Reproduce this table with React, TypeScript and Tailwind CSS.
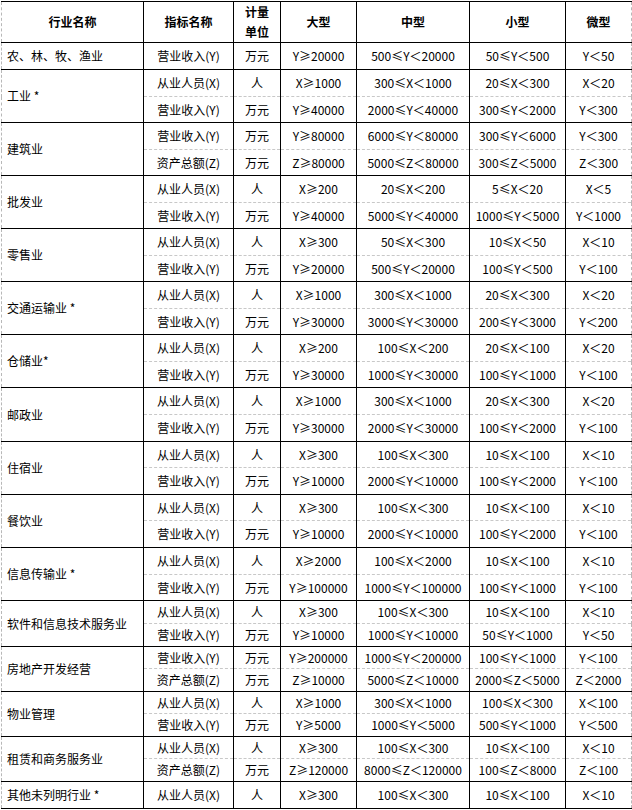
type Sub = { name: string; unit: string; big: string; mid: string; small: string; micro: string };
type Group = { title: string; rows: Sub[]; hs: string[] };

const X = "从业人员(X)";
const Y = "营业收入(Y)";
const Z = "资产总额(Z)";

const groups: Group[] = [
  {
    title: "农、林、牧、渔业",
    hs: ["h-[27px]"],
    rows: [{ name: Y, unit: "万元", big: "Y≥20000", mid: "500≤Y＜20000", small: "50≤Y＜500", micro: "Y＜50" }],
  },
  {
    title: "工业 *",
    hs: ["h-[27px]", "h-[26px]"],
    rows: [
      { name: X, unit: "人", big: "X≥1000", mid: "300≤X＜1000", small: "20≤X＜300", micro: "X＜20" },
      { name: Y, unit: "万元", big: "Y≥40000", mid: "2000≤Y＜40000", small: "300≤Y＜2000", micro: "Y＜300" },
    ],
  },
  {
    title: "建筑业",
    hs: ["h-[27px]", "h-[26px]"],
    rows: [
      { name: Y, unit: "万元", big: "Y≥80000", mid: "6000≤Y＜80000", small: "300≤Y＜6000", micro: "Y＜300" },
      { name: Z, unit: "万元", big: "Z≥80000", mid: "5000≤Z＜80000", small: "300≤Z＜5000", micro: "Z＜300" },
    ],
  },
  {
    title: "批发业",
    hs: ["h-[27px]", "h-[26px]"],
    rows: [
      { name: X, unit: "人", big: "X≥200", mid: "20≤X＜200", small: "5≤X＜20", micro: "X＜5" },
      { name: Y, unit: "万元", big: "Y≥40000", mid: "5000≤Y＜40000", small: "1000≤Y＜5000", micro: "Y＜1000" },
    ],
  },
  {
    title: "零售业",
    hs: ["h-[27px]", "h-[26px]"],
    rows: [
      { name: X, unit: "人", big: "X≥300", mid: "50≤X＜300", small: "10≤X＜50", micro: "X＜10" },
      { name: Y, unit: "万元", big: "Y≥20000", mid: "500≤Y＜20000", small: "100≤Y＜500", micro: "Y＜100" },
    ],
  },
  {
    title: "交通运输业 *",
    hs: ["h-[27px]", "h-[26px]"],
    rows: [
      { name: X, unit: "人", big: "X≥1000", mid: "300≤X＜1000", small: "20≤X＜300", micro: "X＜20" },
      { name: Y, unit: "万元", big: "Y≥30000", mid: "3000≤Y＜30000", small: "200≤Y＜3000", micro: "Y＜200" },
    ],
  },
  {
    title: "仓储业*",
    hs: ["h-[27px]", "h-[26px]"],
    rows: [
      { name: X, unit: "人", big: "X≥200", mid: "100≤X＜200", small: "20≤X＜100", micro: "X＜20" },
      { name: Y, unit: "万元", big: "Y≥30000", mid: "1000≤Y＜30000", small: "100≤Y＜1000", micro: "Y＜100" },
    ],
  },
  {
    title: "邮政业",
    hs: ["h-[27px]", "h-[27px]"],
    rows: [
      { name: X, unit: "人", big: "X≥1000", mid: "300≤X＜1000", small: "20≤X＜300", micro: "X＜20" },
      { name: Y, unit: "万元", big: "Y≥30000", mid: "2000≤Y＜30000", small: "100≤Y＜2000", micro: "Y＜100" },
    ],
  },
  {
    title: "住宿业",
    hs: ["h-[26px]", "h-[27px]"],
    rows: [
      { name: X, unit: "人", big: "X≥300", mid: "100≤X＜300", small: "10≤X＜100", micro: "X＜10" },
      { name: Y, unit: "万元", big: "Y≥10000", mid: "2000≤Y＜10000", small: "100≤Y＜2000", micro: "Y＜100" },
    ],
  },
  {
    title: "餐饮业",
    hs: ["h-[26px]", "h-[27px]"],
    rows: [
      { name: X, unit: "人", big: "X≥300", mid: "100≤X＜300", small: "10≤X＜100", micro: "X＜10" },
      { name: Y, unit: "万元", big: "Y≥10000", mid: "2000≤Y＜10000", small: "100≤Y＜2000", micro: "Y＜100" },
    ],
  },
  {
    title: "信息传输业 *",
    hs: ["h-[27px]", "h-[26px]"],
    rows: [
      { name: X, unit: "人", big: "X≥2000", mid: "100≤X＜2000", small: "10≤X＜100", micro: "X＜10" },
      { name: Y, unit: "万元", big: "Y≥100000", mid: "1000≤Y＜100000", small: "100≤Y＜1000", micro: "Y＜100" },
    ],
  },
  {
    title: "软件和信息技术服务业",
    hs: ["h-[23px]", "h-[23px]"],
    rows: [
      { name: X, unit: "人", big: "X≥300", mid: "100≤X＜300", small: "10≤X＜100", micro: "X＜10" },
      { name: Y, unit: "万元", big: "Y≥10000", mid: "1000≤Y＜10000", small: "50≤Y＜1000", micro: "Y＜50" },
    ],
  },
  {
    title: "房地产开发经营",
    hs: ["h-[22px]", "h-[23px]"],
    rows: [
      { name: Y, unit: "万元", big: "Y≥200000", mid: "1000≤Y＜200000", small: "100≤Y＜1000", micro: "Y＜100" },
      { name: Z, unit: "万元", big: "Z≥10000", mid: "5000≤Z＜10000", small: "2000≤Z＜5000", micro: "Z＜2000" },
    ],
  },
  {
    title: "物业管理",
    hs: ["h-[22px]", "h-[23px]"],
    rows: [
      { name: X, unit: "人", big: "X≥1000", mid: "300≤X＜1000", small: "100≤X＜300", micro: "X＜100" },
      { name: Y, unit: "万元", big: "Y≥5000", mid: "1000≤Y＜5000", small: "500≤Y＜1000", micro: "Y＜500" },
    ],
  },
  {
    title: "租赁和商务服务业",
    hs: ["h-[22px]", "h-[23px]"],
    rows: [
      { name: X, unit: "人", big: "X≥300", mid: "100≤X＜300", small: "10≤X＜100", micro: "X＜10" },
      { name: Z, unit: "万元", big: "Z≥120000", mid: "8000≤Z＜120000", small: "100≤Z＜8000", micro: "Z＜100" },
    ],
  },
  {
    title: "其他未列明行业 *",
    hs: ["h-[27px]"],
    rows: [{ name: X, unit: "人", big: "X≥300", mid: "100≤X＜300", small: "10≤X＜100", micro: "X＜10" }],
  },
];

const cell = "border border-black p-0 text-center align-middle";
const th = "border border-black p-0 text-center align-middle font-bold";
// outer left / right edges are a light dashed rule, not black
const edgeL = "border-l-[#b8b8b8] [border-left-style:dashed]";
const edgeR = "border-r-[#b8b8b8] [border-right-style:dashed]";

export default function App() {
  return (
    <div className="bg-white w-[632px] h-[810px] pt-px pl-px text-[12px] text-black font-['Noto_Sans_CJK_SC',sans-serif]">
      <table className="w-[630px] table-fixed border-collapse leading-[14px]">
        <colgroup>
          <col className="w-[142px]" />
          <col className="w-[90px]" />
          <col className="w-[47px]" />
          <col className="w-[76px]" />
          <col className="w-[113px]" />
          <col className="w-[96px]" />
          <col className="w-[66px]" />
        </colgroup>
        <thead>
          <tr className="h-[41px]">
            <th className={`${th} ${edgeL}`}>行业名称</th>
            <th className={th}>指标名称</th>
            <th className={`${th} leading-[20px]`}>
              计量
              <br />
              单位
            </th>
            <th className={th}>大型</th>
            <th className={th}>中型</th>
            <th className={th}>小型</th>
            <th className={`${th} ${edgeR}`}>微型</th>
          </tr>
        </thead>
        <tbody>
          {groups.map((g) =>
            g.rows.map((r, i) => {
              const last = i === g.rows.length - 1;
              // sub rows inside a group are split by a gray dashed rule
              const rule = `${i > 0 ? "border-t-[#c8c8c8] [border-top-style:dashed]" : ""} ${last ? "" : "border-b-0"}`;
              return (
                <tr key={g.title + i} className={g.hs[i]}>
                  {i === 0 && (
                    <td
                      rowSpan={g.rows.length}
                      className={`border border-black ${edgeL} p-0 pl-[5px] text-left align-middle`}
                    >
                      {g.title}
                    </td>
                  )}
                  <td className={`${cell} ${rule}`}>{r.name}</td>
                  <td className={`${cell} ${rule}`}>{r.unit}</td>
                  <td className={`${cell} ${rule}`}>{r.big}</td>
                  <td className={`${cell} ${rule}`}>{r.mid}</td>
                  <td className={`${cell} ${rule}`}>{r.small}</td>
                  <td className={`${cell} ${rule} ${edgeR}`}>{r.micro}</td>
                </tr>
              );
            })
          )}
        </tbody>
      </table>
    </div>
  );
}
